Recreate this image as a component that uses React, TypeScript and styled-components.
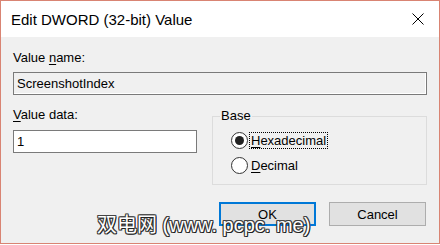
import * as React from 'react';
import styled, { createGlobalStyle } from 'styled-components';

const Global = createGlobalStyle`
  html, body {
    margin: 0;
    padding: 0;
    background: #ffffff;
  }
`;

const Window = styled.div`
  position: relative;
  width: 440px;
  height: 244px;
  box-sizing: border-box;
  border: 1px solid #d98473;
  display: flex;
  flex-direction: column;
  font-family: "Liberation Sans", Arial, sans-serif;
  color: #000;
`;

const TitleBar = styled.div`
  height: 36px;
  flex: none;
  display: flex;
  align-items: center;
  justify-content: space-between;
  padding: 0 15px 0 10px;
  background: #ffffff;
`;

const Title = styled.span`
  font-size: 15px;
  padding-top: 1px;
`;

const Body = styled.div`
  flex: 1;
  background: #f0f0f0;
  display: flex;
  flex-direction: column;
  padding: 13px 12px 0 12px;
  font-size: 13px;
`;

const Label = styled.div`
  line-height: 16px;
  height: 16px;
`;

const Key = styled.span`
  text-decoration: underline;
  text-underline-offset: 2px;
`;

const Field = styled.div<{ $readOnly?: boolean }>`
  box-sizing: border-box;
  height: 23px;
  margin-top: ${p => (p.$readOnly ? 6 : 7)}px;
  padding: 0 3px;
  display: flex;
  align-items: center;
  border: 1px solid #7a7a7a;
  background: ${p => (p.$readOnly ? '#f0f0f0' : '#ffffff')};
  box-shadow: ${p => (p.$readOnly ? 'inset -1px -1px 0 #ffffff' : 'none')};
  width: ${p => (p.$readOnly ? 'auto' : '184px')};
`;

const Row = styled.div`
  margin-top: 12px;
  display: flex;
  gap: 15px;
`;

const Column = styled.div`
  width: 184px;
  display: flex;
  flex-direction: column;
`;

const Group = styled.fieldset`
  flex: 1;
  min-width: 0;
  margin: 0;
  padding: 0 0 10px 7px;
  border: 1px solid #dcdcdc;
`;

const Legend = styled.legend`
  padding: 0 1px;
  line-height: 18px;
`;

const RadioList = styled.div`
  margin-top: 7px;
  padding-left: 11px;
  display: flex;
  flex-direction: column;
  gap: 8px;
`;

const RadioRow = styled.div`
  height: 17px;
  display: flex;
  align-items: center;
  gap: 1px;
`;

const Circle = styled.span<{ $checked?: boolean }>`
  box-sizing: border-box;
  width: 17px;
  height: 17px;
  border-radius: 50%;
  border: 1px solid #333333;
  background: #ffffff;
  display: flex;
  align-items: center;
  justify-content: center;
  &::after {
    content: '';
    width: 9px;
    height: 9px;
    border-radius: 50%;
    background: ${p => (p.$checked ? '#222222' : 'transparent')};
  }
`;

const RadioText = styled.span<{ $focused?: boolean }>`
  box-sizing: border-box;
  height: 17px;
  line-height: 15px;
  padding: 0 1px;
  border: 1px dotted ${p => (p.$focused ? '#000' : 'transparent')};
`;

const Buttons = styled.div`
  margin-top: 17px;
  padding-right: 1px;
  display: flex;
  justify-content: flex-end;
  gap: 13px;
`;

const Button = styled.div<{ $default?: boolean }>`
  box-sizing: border-box;
  width: 97px;
  height: 24px;
  display: flex;
  align-items: center;
  justify-content: center;
  background: #e1e1e1;
  border: ${p => (p.$default ? '2px solid #0078d7' : '1px solid #adadad')};
`;

const Watermark = styled.div`
  position: absolute;
  left: 96px;
  top: 208px;
  font-family: "Liberation Sans", "Noto Sans CJK SC", sans-serif;
  font-size: 20px;
  color: #ffffff;
  text-shadow: 1px 1px 0 #222, -1px -1px 0 #444, 1px -1px 0 #444, -1px 1px 0 #444,
    1px 0 0 #333, -1px 0 0 #333, 0 1px 0 #333, 0 -1px 0 #333;
  white-space: nowrap;
`;

const CloseIcon = () => (
  <svg width="12" height="12" viewBox="0 0 12 12">
    <path d="M0.5 0.5 L11.5 11.5 M11.5 0.5 L0.5 11.5" stroke="#000" strokeWidth="1" fill="none" />
  </svg>
);

const App = () => {
  const [base, setBase] = React.useState<'hex' | 'dec'>('hex');

  return <Window>
    <Global />
    <TitleBar>
      <Title>Edit DWORD (32-bit) Value</Title>
      <CloseIcon />
    </TitleBar>
    <Body>
      <Label>Value <Key>n</Key>ame:</Label>
      <Field $readOnly>ScreenshotIndex</Field>
      <Row>
        <Column>
          <Label><Key>V</Key>alue data:</Label>
          <Field>1</Field>
        </Column>
        <Group>
          <Legend>Base</Legend>
          <RadioList>
            <RadioRow onClick={() => setBase('hex')}>
              <Circle $checked={base === 'hex'} />
              <RadioText $focused={base === 'hex'}><Key>H</Key>exadecimal</RadioText>
            </RadioRow>
            <RadioRow onClick={() => setBase('dec')}>
              <Circle $checked={base === 'dec'} />
              <RadioText $focused={base === 'dec'}><Key>D</Key>ecimal</RadioText>
            </RadioRow>
          </RadioList>
        </Group>
      </Row>
      <Buttons>
        <Button $default>OK</Button>
        <Button>Cancel</Button>
      </Buttons>
    </Body>
    <Watermark>双电网 (www. pcpc. me)</Watermark>
  </Window>;
};

export default App;
